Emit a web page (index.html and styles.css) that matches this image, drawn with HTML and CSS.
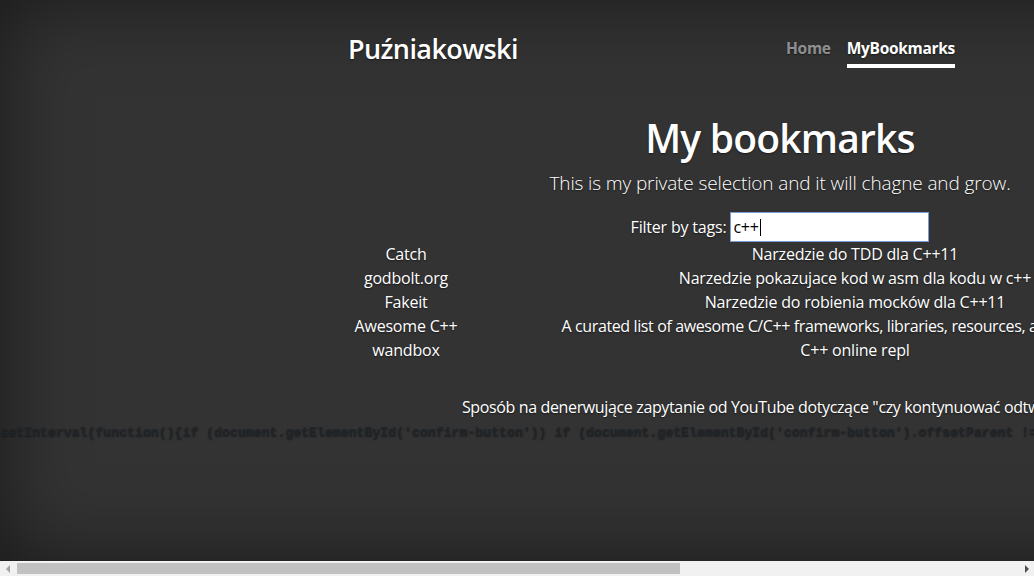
FILE: index.html
```html
<!DOCTYPE html>
<html lang="pl">
<head>
<meta charset="utf-8">
<title>MyBookmarks - Puźniakowski</title>
<link rel="stylesheet" href="styles.css">
</head>
<body>
<div class="page">
  <header class="masthead">
    <h3 class="brand">Puźniakowski</h3>
    <nav class="nav">
      <a class="nav-link" href="#">Home</a>
      <a class="nav-link active" href="#">MyBookmarks</a>
    </nav>
  </header>
  <main class="cover">
    <h1 class="cover-heading">My bookmarks</h1>
    <p class="lead">This is my private selection and it will chagne and grow.</p>
    <div class="filter">
      <label class="filter-label">Filter by tags:</label>
      <div class="input"><span class="input-text">c++</span><span class="caret"></span></div>
    </div>
    <table class="bookmarks">
      <colgroup><col class="col-name"><col class="col-desc"></colgroup>
      <tbody>
        <tr><td>Catch</td><td>Narzedzie do TDD dla C++11</td></tr>
        <tr><td>godbolt.org</td><td>Narzedzie pokazujace kod w asm dla kodu w c++</td></tr>
        <tr><td>Fakeit</td><td>Narzedzie do robienia mocków dla C++11</td></tr>
        <tr><td>Awesome C++</td><td class="long">A curated list of awesome C/C++ frameworks, libraries, resources, and shiny things.</td></tr>
        <tr><td>wandbox</td><td>C++ online repl</td></tr>
      </tbody>
    </table>
    <p class="tip">Sposób na denerwujące zapytanie od YouTube dotyczące "czy kontynuować odtwarzanie"</p>
    <div class="code-row"><code class="code">setInterval(function(){if (document.getElementById('confirm-button')) if (document.getElementById('confirm-button').offsetParent != null) document.getElementById('confirm-button').click();}, 2000);</code></div>
  </main>
</div>
<div class="hscroll">
  <span class="arrow arrow-left"></span>
  <div class="track"><div class="thumb"></div></div>
  <span class="arrow arrow-right"></span>
</div>
</body>
</html>
```

FILE: styles.css
```css
html, body {
  margin: 0;
  height: 100%;
  overflow: hidden;
  background: #333;
}

body {
  font-family: "Open Sans", "Noto Sans", sans-serif;
  font-size: 16px;
  line-height: 1.5;
  letter-spacing: -0.2px;
  color: #fff;
  text-shadow: 0 0.05rem 0.1rem rgba(0, 0, 0, 0.5);
}

.page {
  width: 1560px;
  height: 561px;
  box-shadow: inset 0 0 5rem rgba(0, 0, 0, 0.5);
  display: flex;
  flex-direction: column;
}

.masthead {
  width: 607px;
  margin-left: 348px;
  padding-top: 32px;
  display: flex;
  justify-content: space-between;
  align-items: flex-start;
}

.brand {
  margin: 0;
  font-size: 27px;
  font-weight: 600;
  line-height: 33.6px;
  letter-spacing: -0.6px;
}

.nav {
  display: flex;
  gap: 16px;
}

.nav-link {
  padding: 4px 0;
  font-size: 15.5px;
  line-height: 24px;
  letter-spacing: -0.3px;
  font-weight: 700;
  color: rgba(255, 255, 255, 0.5);
  text-decoration: none;
  border-bottom: 4px solid transparent;
}

.nav-link.active {
  color: #fff;
  border-bottom-color: #fff;
}

.cover {
  text-align: center;
  padding-top: 46px;
}

.cover-heading {
  margin: 0 0 6px;
  font-size: 39px;
  font-weight: 600;
  line-height: 48px;
  letter-spacing: -0.8px;
}

.lead {
  margin: 0 0 14px;
  font-size: 19px;
  font-weight: 300;
  line-height: 30px;
  letter-spacing: -0.12px;
}

.filter {
  display: flex;
  justify-content: center;
  align-items: center;
  gap: 4px;
  height: 30px;
}

.input {
  box-sizing: border-box;
  width: 199px;
  height: 30px;
  border: 1px solid #7a9bd6;
  background: #fff;
  color: #000;
  text-shadow: none;
  display: flex;
  align-items: center;
  padding-left: 2px;
  text-align: left;
}

.caret {
  width: 1px;
  height: 17px;
  background: #000;
  margin-left: 1px;
}

.bookmarks {
  margin-left: 332px;
  border-collapse: collapse;
  table-layout: fixed;
  width: 898px;
}

.col-name { width: 148px; }
.col-desc { width: 750px; }

.bookmarks td {
  padding: 0;
  white-space: nowrap;
  text-align: center;
  line-height: 24px;
}

.bookmarks td.long {
  letter-spacing: -0.38px;
}

.tip {
  margin: 33px 0 0;
  white-space: nowrap;
  letter-spacing: -0.36px;
  display: flex;
  justify-content: center;
}

.code-row {
  display: flex;
  justify-content: center;
  margin-top: 3px;
}

.code {
  flex: none;
  font-family: "Liberation Mono", "DejaVu Sans Mono", monospace;
  font-size: 13.2px;
  line-height: 22px;
  letter-spacing: 0;
  font-weight: 700;
  color: #212529;
  white-space: pre;
}

.hscroll {
  position: fixed;
  left: 0;
  right: 0;
  bottom: 0;
  height: 15px;
  background: #f1f1f1;
  display: flex;
  align-items: stretch;
}

.arrow {
  width: 15px;
  flex: none;
  display: flex;
  align-items: center;
  justify-content: center;
}

.arrow::before {
  content: "";
  width: 0;
  height: 0;
  border-top: 4px solid transparent;
  border-bottom: 4px solid transparent;
}

.arrow-left::before { border-right: 4px solid #a3a3a3; }
.arrow-right::before { border-left: 4px solid #505050; }

.track {
  flex: 1;
  padding: 2px 0;
  box-sizing: border-box;
}

.thumb {
  margin-left: 2px;
  width: 663px;
  height: 100%;
  background: #c1c1c1;
}
```
